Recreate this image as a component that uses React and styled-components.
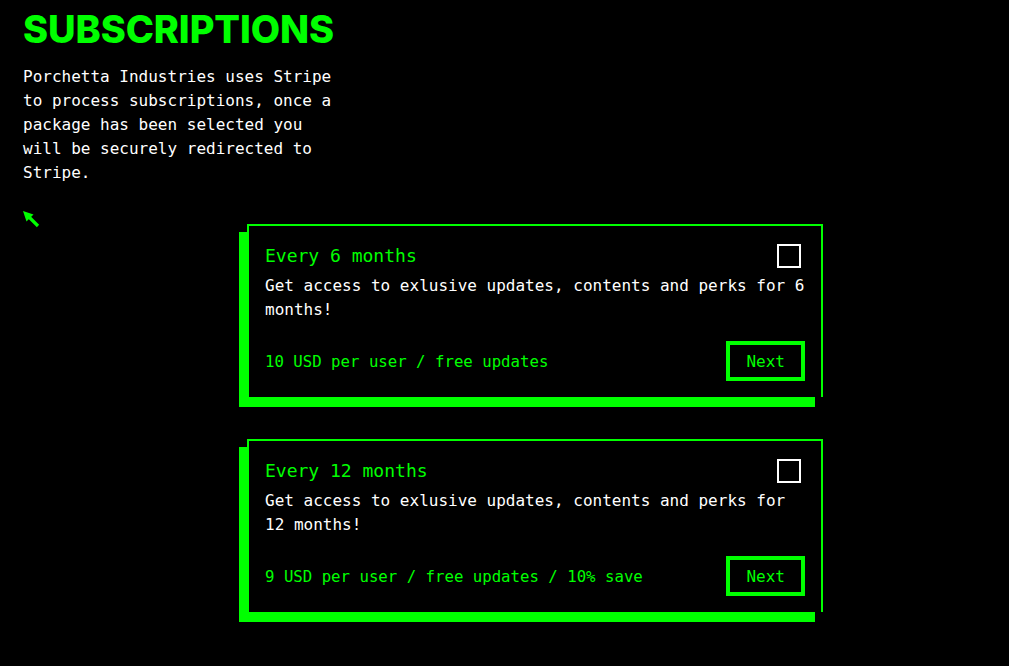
import React, { useState } from "react";
import styled, { createGlobalStyle } from "styled-components";

const GREEN = "#00ff00";
const MONO = '"DejaVu Sans Mono", "Liberation Mono", monospace';

const GlobalStyle = createGlobalStyle`
  html, body {
    margin: 0;
    padding: 0;
    background: #000;
  }
  body {
    font-family: ${MONO};
    color: #fff;
  }
`;

const plans = [
  {
    title: "Every 6 months",
    text: "Get access to exlusive updates, contents and perks for 6 months!",
    price: "10 USD per user / free updates",
  },
  {
    title: "Every 12 months",
    text: "Get access to exlusive updates, contents and perks for 12 months!",
    price: "9 USD per user / free updates / 10% save",
  },
];

const PointerIcon = () => (
  <svg width="16" height="16" viewBox="0 0 16 16" style={{ overflow: "visible" }}>
    <polygon points="0,0 10.5,3.5 3.5,10.5" fill={GREEN} />
    <line x1="5" y1="5" x2="15" y2="15" stroke={GREEN} strokeWidth="3.2" />
  </svg>
);

const App = () => {
  const [selected, setSelected] = useState(null);
  return (
    <Page>
      <GlobalStyle />
      <Intro>
        <Heading>SUBSCRIPTIONS</Heading>
        <Lead>
          Porchetta Industries uses Stripe to process subscriptions, once a
          package has been selected you will be securely redirected to Stripe.
        </Lead>
        <Pointer>
          <PointerIcon />
        </Pointer>
      </Intro>
      <PlanList>
        {plans.map((plan, index) => (
          <PlanCard key={index}>
            <PlanHead>
              <PlanTitle>{plan.title}</PlanTitle>
              <Check
                $checked={selected === index}
                onClick={() => setSelected(index)}
              />
            </PlanHead>
            <PlanText>{plan.text}</PlanText>
            <PlanFooter>
              <Price>{plan.price}</Price>
              <NextButton>Next</NextButton>
            </PlanFooter>
          </PlanCard>
        ))}
      </PlanList>
    </Page>
  );
};

export default App;

const Page = styled.main`
  padding: 0 23px 40px;
  min-height: 666px;
  box-sizing: border-box;
`;

const Intro = styled.section`
  display: flex;
  flex-direction: column;
  align-items: flex-start;
`;

const Heading = styled.h1`
  margin: 0;
  padding-top: 8px;
  font-family: Inter, "Liberation Sans", sans-serif;
  font-weight: 800;
  font-size: 38px;
  line-height: 43px;
  letter-spacing: -0.1px;
  color: ${GREEN};
`;

const Lead = styled.p`
  margin: 14px 0 0;
  width: 315px;
  font-size: 16px;
  line-height: 24px;
`;

const Pointer = styled.div`
  margin-top: 26px;
  height: 13px;
  display: flex;
`;

const PlanList = styled.div`
  display: flex;
  flex-direction: column;
  gap: 42px;
  margin-left: 224px;
`;

const PlanCard = styled.article`
  width: 576px;
  box-sizing: border-box;
  border: 2px solid ${GREEN};
  border-bottom: none;
  background: #000;
  box-shadow: -8px 8px 0 ${GREEN}, -8px 10px 0 ${GREEN};
  padding: 18px 16px 16px;
  display: flex;
  flex-direction: column;
`;

const PlanHead = styled.div`
  display: flex;
  justify-content: space-between;
  align-items: center;
  height: 24px;
`;

const PlanTitle = styled.h3`
  margin: 0;
  font-size: 18px;
  font-weight: 400;
  line-height: 24px;
  color: ${GREEN};
`;

const Check = styled.span`
  width: 24px;
  height: 24px;
  box-sizing: border-box;
  border: 2px solid #fff;
  margin-right: 4px;
  background: ${(p) => (p.$checked ? "#fff" : "transparent")};
  cursor: pointer;
`;

const PlanText = styled.p`
  margin: 6px 0 0;
  font-size: 16px;
  line-height: 24px;
  color: #fff;
`;

const PlanFooter = styled.div`
  display: flex;
  justify-content: space-between;
  align-items: center;
  margin-top: 19px;
`;

const Price = styled.span`
  font-size: 15.7px;
  color: ${GREEN};
`;

const NextButton = styled.button`
  height: 40px;
  padding: 0 16px;
  border: 4px solid ${GREEN};
  background: #000;
  color: ${GREEN};
  font-family: ${MONO};
  font-size: 16px;
  cursor: pointer;
`;
